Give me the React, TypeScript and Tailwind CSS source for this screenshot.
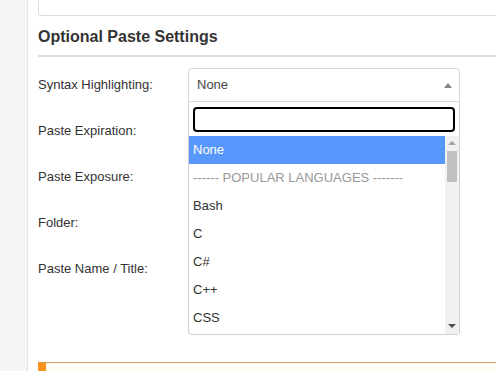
const labels = [
  "Syntax Highlighting:",
  "Paste Expiration:",
  "Paste Exposure:",
  "Folder:",
  "Paste Name / Title:",
];

const options = [
  { id: "none", text: "None", selected: true },
  { id: "popular", text: "------ POPULAR LANGUAGES -------", muted: true },
  { id: "bash", text: "Bash" },
  { id: "c", text: "C" },
  { id: "csharp", text: "C#" },
  { id: "cpp", text: "C++" },
  { id: "css", text: "CSS" },
];

function SyntaxSelect() {
  return (
    <div className="relative w-[272px]">
      <div className="flex h-[34px] items-center justify-between rounded-t-[4px] border border-[#d8d8d8] pl-[8px] pr-[7px] text-[13px] text-[#444]">
        <span>None</span>
        <span className="h-0 w-0 border-x-[4px] border-b-[5px] border-x-transparent border-b-[#888]" />
      </div>
      <div className="absolute left-0 top-[34px] z-10 w-[272px] rounded-b-[4px] border border-t-0 border-[#cfcfcf] bg-white">
        <div className="px-[4px] pb-[4px] pt-[5px]">
          <div className="h-[25px] rounded-[4px] border-2 border-black bg-white" />
        </div>
        <div className="flex h-[198px]">
          <div className="flex-1">
            {options.map((o) => (
              <div
                key={o.id}
                className={
                  o.selected
                    ? "flex h-[28px] items-center bg-[#5897fb] px-[4px] pb-[1px] text-[13px] text-white"
                    : o.muted
                      ? "flex h-[28px] items-center px-[4px] pb-[1px] text-[13px] text-[#999]"
                      : "flex h-[28px] items-center px-[4px] pb-[1px] text-[13px] text-[#333]"
                }
              >
                {o.text}
              </div>
            ))}
          </div>
          <div className="flex w-[14px] flex-col items-center bg-[#f1f1f1]">
            <span className="mt-[5px] h-0 w-0 border-x-[4px] border-b-[4px] border-x-transparent border-b-[#a3a3a3]" />
            <div className="mt-[6px] h-[31px] w-[10px] bg-[#c1c1c1]" />
            <div className="flex-1" />
            <span className="mb-[6px] h-0 w-0 border-x-[4px] border-t-[4px] border-x-transparent border-t-[#505050]" />
          </div>
        </div>
      </div>
    </div>
  );
}

export default function App() {
  return (
    <div className="flex h-[371px] w-[496px] overflow-hidden bg-white font-['Liberation_Sans',Arial,sans-serif]">
      <div className="w-[28px] shrink-0 border-r border-[#e5e5e5] bg-[#f5f5f5]" />
      <div className="min-w-0 flex-1 pl-[10px]">
        <div className="w-[480px]">
          <div className="h-[16px] rounded-bl-[4px] border-b border-l border-[#dcdcdc]" />
          <h2 className="mt-[11px] border-b-2 border-[#dddddd] pb-[8px] text-[16px] font-bold leading-[20px] text-[#333]">
            Optional Paste Settings
          </h2>
          <div className="mt-[11px] flex flex-col gap-y-[12px]">
            {labels.map((label, i) => (
              <div key={label} className="flex h-[34px] items-center">
                <div className="w-[150px] text-[13px] text-[#333]">{label}</div>
                {i === 0 && <SyntaxSelect />}
              </div>
            ))}
          </div>
          <div className="mt-[76px] h-[20px] border-l-[8px] border-t border-l-[#f7931e] border-t-[#c9a063] bg-[#fffdf3]" />
        </div>
      </div>
    </div>
  );
}
